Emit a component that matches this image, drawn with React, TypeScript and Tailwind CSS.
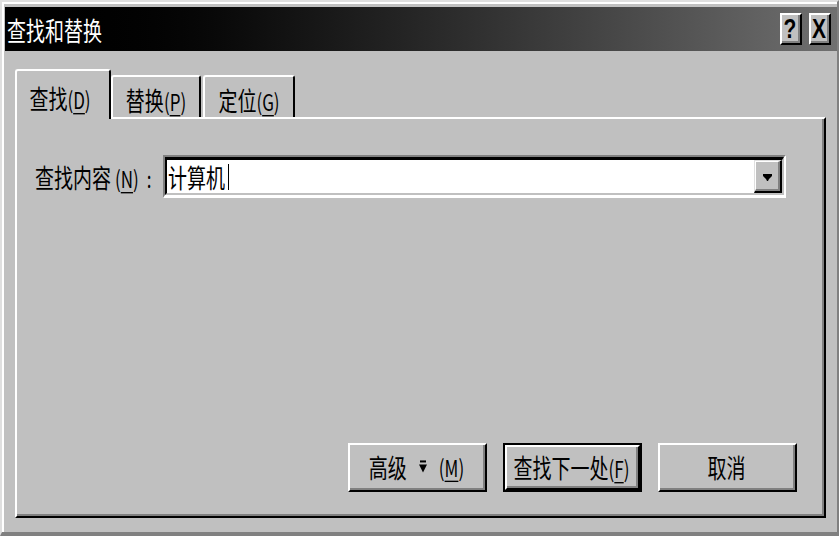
import React from "react";

function S({ children, className = "" }: { children: React.ReactNode; className?: string }) {
  return <span className={`inline-block whitespace-nowrap leading-none scale-y-[1.35] ${className}`}>{children}</span>;
}

function TitleBtn({ children }: { children: React.ReactNode }) {
  return (
    <div className="w-[22px] h-[32px] bg-[#c0c0c0] border-t-2 border-l-2 border-t-white border-l-white border-b-2 border-r-2 border-b-black border-r-black">
      <div className="w-full h-full flex items-center justify-center border-b-2 border-r-2 border-b-[#808080] border-r-[#808080]">
        <span className="inline-block leading-none scale-y-[1.3] font-[family-name:'Liberation_Sans',sans-serif] font-bold text-[21px] text-black">
          {children}
        </span>
      </div>
    </div>
  );
}

function Btn({ children, def = false }: { children: React.ReactNode; def?: boolean }) {
  if (def) {
    return (
      <div className="w-[139px] h-[49px] border-2 border-black">
        <div className="w-full h-full border-t-2 border-l-2 border-t-white border-l-white border-b-2 border-r-2 border-b-black border-r-black">
          <div className="w-full h-full flex items-center justify-center border-b-2 border-r-2 border-b-[#808080] border-r-[#808080]">
            {children}
          </div>
        </div>
      </div>
    );
  }
  return (
    <div className="w-[139px] h-[49px] border-t-2 border-l-2 border-t-white border-l-white border-b-2 border-r-2 border-b-black border-r-black">
      <div className="w-full h-full flex items-center justify-center border-b-2 border-r-2 border-b-[#808080] border-r-[#808080]">
        {children}
      </div>
    </div>
  );
}

function Mn({ letter }: { letter: string }) {
  return (
    <span className="text-[17px]">
      (<span className="underline underline-offset-[3px]">{letter}</span>)
    </span>
  );
}

export default function App() {
  return (
    <div className="w-[839px] h-[536px] overflow-hidden bg-[#c0c0c0] text-black font-[family-name:'Noto_Sans_CJK_SC','Noto_Sans',sans-serif]">
      <div className="w-full h-full flex flex-col border-t-2 border-l-2 border-t-[#dfdfdf] border-l-[#dfdfdf] border-r-2 border-b-4 border-r-[#808080] border-b-[#808080]">
        <div className="flex-1 flex flex-col min-h-0 border-t-2 border-l-2 border-t-white border-l-white pt-[3px] pl-[1px]">
          {/* Title bar */}
          <div className="h-[44px] shrink-0 flex items-center bg-linear-to-r from-black to-[#707070] pl-[2px] pr-[6px]">
            <S className="text-white text-[19px]">查找和替换</S>
            <div className="ml-auto flex gap-[7px]">
              <TitleBtn>?</TitleBtn>
              <TitleBtn>X</TitleBtn>
            </div>
          </div>

          {/* Tabs + panel */}
          <div className="flex-1 flex flex-col min-h-0 mt-[18px] ml-[10px] mr-[11px] mb-[14px]">
            <div className="h-[48px] shrink-0 flex items-end">
              <div className="relative z-10 -mb-[2px] w-[96px] h-[50px] bg-[#c0c0c0] rounded-t-[3px] border-t-2 border-l-2 border-t-white border-l-white border-r-2 border-r-black flex items-center justify-center pt-[4px] pr-[6px]">
                <S className="text-[19px]">
                  查找<Mn letter="D" />
                </S>
              </div>
              <div className="w-[90px] h-[42px] bg-[#c0c0c0] rounded-t-[3px] border-t-2 border-l-2 border-t-white border-l-white border-r-2 border-r-black flex items-center justify-center pt-[5px]">
                <S className="text-[19px]">
                  替换<Mn letter="P" />
                </S>
              </div>
              <div className="ml-[2px] w-[92px] h-[42px] bg-[#c0c0c0] rounded-t-[3px] border-t-2 border-l-2 border-t-white border-l-white border-r-2 border-r-black flex items-center justify-center pt-[5px]">
                <S className="text-[19px]">
                  定位<Mn letter="G" />
                </S>
              </div>
            </div>

            <div className="flex-1 flex min-h-0 border-t-2 border-l-2 border-t-white border-l-white border-r-2 border-b-2 border-r-black border-b-black">
              <div className="flex-1 flex flex-col border-r-2 border-b-2 border-r-[#808080] border-b-[#808080] pl-[18px] pt-[36px] pr-[25px] pb-[22px]">
                {/* Find row */}
                <div className="flex items-center">
                  <div className="w-[128px] flex items-center">
                    <S className="text-[19px]">
                      查找内容<span className="ml-[4px]"><Mn letter="N" /></span>
                      <span className="text-[17px] ml-[8px]">:</span>
                    </S>
                  </div>
                  <div className="w-[623px] h-[43px] flex border-t-2 border-l-2 border-t-[#808080] border-l-[#808080] border-b-[3px] border-r-2 border-b-white border-r-white">
                    <div className="flex-1 flex bg-white border-t-[3px] border-l-2 border-t-black border-l-black border-b-2 border-r-2 border-b-[#c0c0c0] border-r-[#c0c0c0]">
                      <div className="flex-1 flex items-center pl-[1px]">
                        <S className="text-[19px]">计算机</S>
                        <span className="ml-[3px] w-[1px] h-[26px] bg-black" />
                      </div>
                      <div className="w-[28px] h-full bg-[#c0c0c0] border-t-[1px] border-l-[1px] border-t-[#dfdfdf] border-l-[#dfdfdf] border-b-2 border-r-2 border-b-black border-r-black">
                        <div className="w-full h-full flex items-center justify-center border-t-[1px] border-l-[1px] border-t-white border-l-white border-b-2 border-r-2 border-b-[#808080] border-r-[#808080] pt-[3px]">
                          <svg width="9" height="7" viewBox="0 0 9 7">
                            <polygon points="0,0 9,0 9,2 6,5 5,7 4,7 3,5 0,2" fill="black" />
                          </svg>
                        </div>
                      </div>
                    </div>
                  </div>
                </div>

                {/* Buttons */}
                <div className="mt-auto flex justify-end gap-[16px]">
                  <Btn>
                    <span className="inline-flex items-center whitespace-nowrap leading-none scale-y-[1.35] text-[19px]">
                      <span>高级</span>
                      <svg width="8" height="12" viewBox="0 0 8 12" className="mx-[12px]">
                        <rect x="1" y="1" width="6" height="1.5" fill="black" />
                        <polygon points="0,4 8,4 4,10" fill="black" />
                      </svg>
                      <Mn letter="M" />
                    </span>
                  </Btn>
                  <Btn def>
                    <S className="text-[19px]">
                      查找下一处<Mn letter="F" />
                    </S>
                  </Btn>
                  <Btn>
                    <S className="text-[19px]">取消</S>
                  </Btn>
                </div>
              </div>
            </div>
          </div>
        </div>
      </div>
    </div>
  );
}
